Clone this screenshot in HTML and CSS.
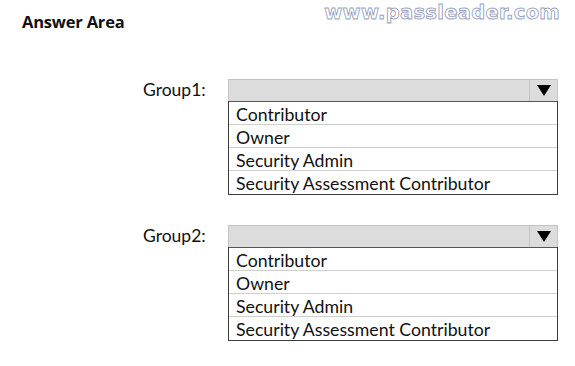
FILE: index.html
```html
<!DOCTYPE html>
<html>
<head>
<meta charset="utf-8">
<link rel="stylesheet" href="styles.css">
</head>
<body>
<div class="top">
  <h1 class="title">Answer Area</h1>
  <div class="mark">www.passleader.com</div>
</div>
<div class="groups">
  <div class="group">
    <div class="label">Group1:</div>
    <div class="dropdown">
      <div class="head"><div class="fill"></div><div class="arrow"><svg width="14" height="11" viewBox="0 0 14 11"><path d="M0 0H14L7 11Z" fill="#000"/></svg></div></div>
      <ul class="list">
        <li>Contributor</li>
        <li>Owner</li>
        <li>Security Admin</li>
        <li>Security Assessment Contributor</li>
      </ul>
    </div>
  </div>
  <div class="group">
    <div class="label">Group2:</div>
    <div class="dropdown">
      <div class="head"><div class="fill"></div><div class="arrow"><svg width="14" height="11" viewBox="0 0 14 11"><path d="M0 0H14L7 11Z" fill="#000"/></svg></div></div>
      <ul class="list">
        <li>Contributor</li>
        <li>Owner</li>
        <li>Security Admin</li>
        <li>Security Assessment Contributor</li>
      </ul>
    </div>
  </div>
</div>
</body>
</html>
```
FILE: styles.css
```css
html, body { margin: 0; padding: 0; background: #fff; }
body { width: 575px; height: 366px; overflow: hidden; font-family: Lato, "Open Sans", sans-serif; color: #111; }
.top { display: flex; align-items: flex-start; justify-content: space-between; height: 79px; }
.title { margin: 10px 0 0 22px; font-size: 16.5px; font-weight: 700; font-family: "Open Sans", sans-serif; letter-spacing: -0.2px; }
.mark { margin: 1px 15px 0 0; font-family: "DejaVu Sans", sans-serif; font-weight: 700; font-size: 19.5px; letter-spacing: 0.3px; color: #fff; -webkit-text-stroke: 0.9px #98a2bf; }
.groups { display: flex; flex-direction: column; gap: 30px; }
.group { display: flex; align-items: flex-start; padding-left: 143px; }
.label { width: 85px; height: 22px; line-height: 22px; font-size: 17.5px; }
.dropdown { width: 330px; }
.head { display: flex; height: 21px; border: 1px solid #c4c4c4; border-bottom: none; background: #dcdcdc; }
.fill { flex: 1; }
.arrow { width: 27px; border-left: 1px solid #c4c4c4; display: flex; align-items: center; justify-content: center; }
.list { list-style: none; margin: 0; padding: 0; border: 1px solid #3c3c3c; border-top: 1px solid #555; }
.list li { height: 22px; line-height: 25px; padding-left: 7px; font-size: 17.7px; border-top: 1px solid #cfcfcf; }
.list li:first-child { border-top: none; }
.list li:last-child { height: 23px; }
```
